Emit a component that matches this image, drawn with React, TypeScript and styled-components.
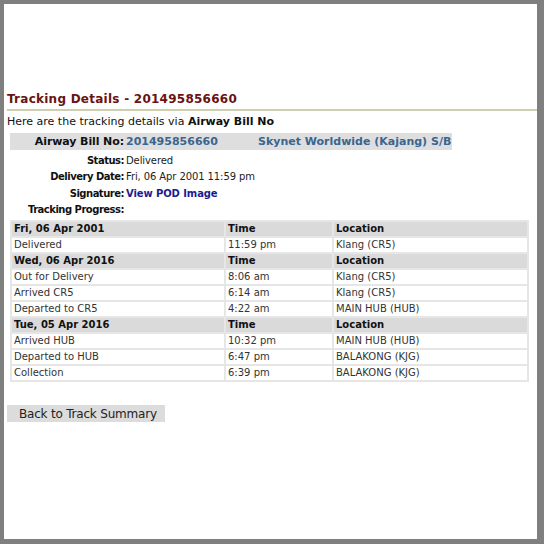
import React from "react";
import styled, { createGlobalStyle } from "styled-components";

const Global = createGlobalStyle`
  html, body { margin: 0; padding: 0; background: #fff; }
  body { font-family: "DejaVu Sans", Verdana, sans-serif; font-size: 11px; color: #222; }
`;

const Frame = styled.div`
  box-sizing: border-box;
  width: 544px;
  height: 544px;
  border-style: solid;
  border-color: #7f7f7f;
  border-width: 4px 7px 5px 4px;
  background: #fff;
  padding: 86px 0 0 3px;
`;

const Title = styled.h1`
  margin: 0;
  font-size: 12px;
  line-height: 18px;
  font-weight: bold;
  color: #6b1212;
  border-bottom: 2px solid #cfcfb0;
  padding-bottom: 1px;
  letter-spacing: 0.25px;
`;

const Intro = styled.p`
  margin: 3px 0 0 0;
  line-height: 16px;
  color: #111;
`;

const InfoBlock = styled.div`
  margin: 3px 0 0 3px;
  display: flex;
  flex-direction: column;
`;

const InfoRow = styled.div<{ $highlight?: boolean }>`
  display: flex;
  align-items: center;
  height: ${(p) => (p.$highlight ? "17px" : "16.5px")};
  margin-bottom: ${(p) => (p.$highlight ? "2px" : "0")};
  width: ${(p) => (p.$highlight ? "442px" : "auto")};
  background: ${(p) => (p.$highlight ? "#dedede" : "transparent")};
  font-size: ${(p) => (p.$highlight ? "11px" : "10px")};
  letter-spacing: ${(p) => (p.$highlight ? "0" : "-0.1px")};
`;

const Label = styled.div<{ $big?: boolean }>`
  width: 114px;
  text-align: right;
  font-weight: bold;
  color: #111;
  padding-right: 2px;
  flex: none;
  white-space: nowrap;
  letter-spacing: ${(p) => (p.$big ? "-0.1px" : "-0.5px")};
`;

const Value = styled.div<{ $tone?: "blue" | "link" | "plain"; $width?: number }>`
  width: ${(p) => (p.$width ? `${p.$width}px` : "auto")};
  flex: none;
  white-space: nowrap;
  font-weight: ${(p) => (p.$tone === "plain" ? "normal" : "bold")};
  color: ${(p) =>
    p.$tone === "blue" ? "#3a6590" : p.$tone === "link" ? "#1c1c90" : "#222"};
`;

const Table = styled.table`
  margin: 2px 0 0 3px;
  width: 519px;
  border-collapse: separate;
  border-spacing: 2px;
  background: #e6e6e6;
  font-size: 10px;
`;

const Cell = styled.td<{ $head?: boolean }>`
  height: 14px;
  padding: 0 2px;
  line-height: 14px;
  background: ${(p) => (p.$head ? "#dadada" : "#fff")};
  font-weight: ${(p) => (p.$head ? "bold" : "normal")};
  color: ${(p) => (p.$head ? "#111" : "#333")};
  white-space: nowrap;
`;

const Button = styled.button`
  margin: 23px 0 0 0;
  width: 158px;
  height: 17px;
  border: none;
  background: #dcdcdc;
  font-family: "DejaVu Sans", Verdana, sans-serif;
  font-size: 12px;
  letter-spacing: -0.2px;
  color: #222;
  padding: 1px 0 0 12px;
  text-align: left;
  line-height: 16px;
`;

type Group = { date: string; rows: [string, string, string][] };

const groups: Group[] = [
  { date: "Fri, 06 Apr 2001", rows: [["Delivered", "11:59 pm", "Klang (CR5)"]] },
  {
    date: "Wed, 06 Apr 2016",
    rows: [
      ["Out for Delivery", "8:06 am", "Klang (CR5)"],
      ["Arrived CR5", "6:14 am", "Klang (CR5)"],
      ["Departed to CR5", "4:22 am", "MAIN HUB (HUB)"],
    ],
  },
  {
    date: "Tue, 05 Apr 2016",
    rows: [
      ["Arrived HUB", "10:32 pm", "MAIN HUB (HUB)"],
      ["Departed to HUB", "6:47 pm", "BALAKONG (KJG)"],
      ["Collection", "6:39 pm", "BALAKONG (KJG)"],
    ],
  },
];

export default function App() {
  return (
    <>
      <Global />
      <Frame>
        <Title>Tracking Details - 201495856660</Title>
        <Intro>
          Here are the tracking details via <b>Airway Bill No</b>
        </Intro>
        <InfoBlock>
          <InfoRow $highlight>
            <Label $big>Airway Bill No:</Label>
            <Value $tone="blue" $width={132}>201495856660</Value>
            <Value $tone="blue">Skynet Worldwide (Kajang) S/B</Value>
          </InfoRow>
          <InfoRow>
            <Label>Status:</Label>
            <Value $tone="plain">Delivered</Value>
          </InfoRow>
          <InfoRow>
            <Label>Delivery Date:</Label>
            <Value $tone="plain">Fri, 06 Apr 2001 11:59 pm</Value>
          </InfoRow>
          <InfoRow>
            <Label>Signature:</Label>
            <Value $tone="link">View POD Image</Value>
          </InfoRow>
          <InfoRow>
            <Label>Tracking Progress:</Label>
          </InfoRow>
        </InfoBlock>
        <Table>
          <colgroup>
            <col style={{ width: 212 }} />
            <col style={{ width: 106 }} />
            <col />
          </colgroup>
          <tbody>
            {groups.map((g) => (
              <React.Fragment key={g.date}>
                <tr>
                  <Cell $head>{g.date}</Cell>
                  <Cell $head>Time</Cell>
                  <Cell $head>Location</Cell>
                </tr>
                {g.rows.map((r) => (
                  <tr key={r[0] + r[1]}>
                    <Cell>{r[0]}</Cell>
                    <Cell>{r[1]}</Cell>
                    <Cell>{r[2]}</Cell>
                  </tr>
                ))}
              </React.Fragment>
            ))}
          </tbody>
        </Table>
        <Button>Back to Track Summary</Button>
      </Frame>
    </>
  );
}
